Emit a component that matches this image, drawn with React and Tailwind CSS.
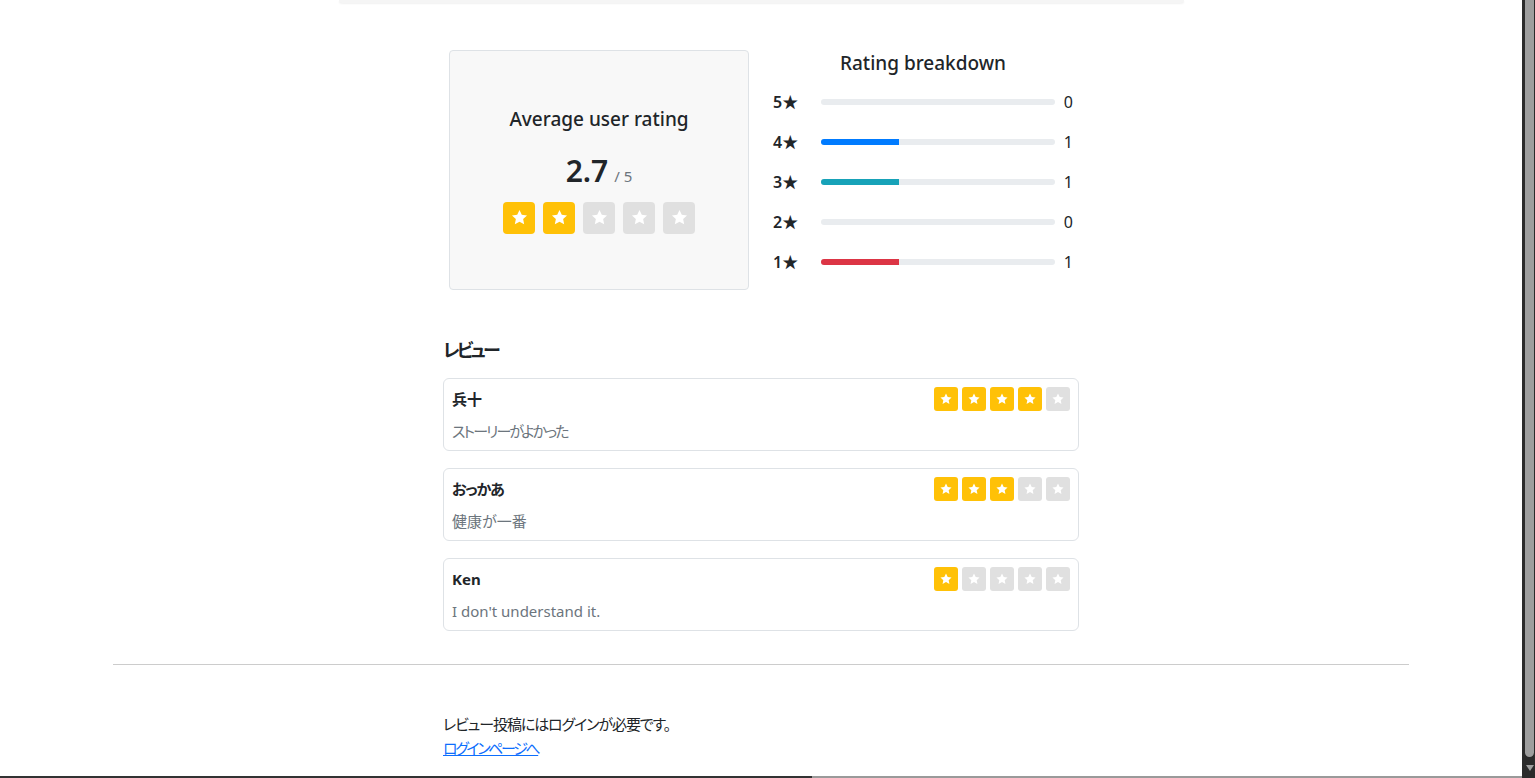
import React from "react";

const summary = { average: 2.7, max: 5, filled: 2 };

const breakdown = [
  { stars: 5, count: 0, color: "" },
  { stars: 4, count: 1, color: "bg-[#007bff]" },
  { stars: 3, count: 1, color: "bg-[#17a2b8]" },
  { stars: 2, count: 0, color: "" },
  { stars: 1, count: 1, color: "bg-[#dc3545]" },
];

// tracking tightens kana so the widths land near the reference's Windows font
const reviews = [
  { name: "兵十", nameTrack: "", rating: 4, body: "ストーリーがよかった", bodyTrack: "tracking-[-1.9px]" },
  { name: "おっかあ", nameTrack: "tracking-[-1.2px]", rating: 3, body: "健康が一番", bodyTrack: "" },
  { name: "Ken", nameTrack: "", rating: 1, body: "I don't understand it.", bodyTrack: "" },
];

const StarGlyph = ({ size }) => (
  <svg width={size} height={size} viewBox="0 0 24 24" fill="#fff">
    <path d="M12 2.5l2.9 6.1 6.6.8-4.9 4.6 1.3 6.6L12 17.3l-5.9 3.3 1.3-6.6-4.9-4.6 6.6-.8z" />
  </svg>
);

const StarBox = ({ on, big }) => (
  <div
    className={
      (big ? "h-8 w-8 rounded-[4px]" : "h-6 w-6 rounded-[3px]") +
      " flex items-center justify-center " +
      (on ? "bg-[#ffc107]" : "bg-[#e0e0e0]")
    }
  >
    <StarGlyph size={big ? 19 : 14} />
  </div>
);

const StarRow = ({ value, big }) => (
  <div className={"flex " + (big ? "gap-2" : "gap-1")}>
    {[1, 2, 3, 4, 5].map((i) => (
      <StarBox key={i} on={i <= value} big={big} />
    ))}
  </div>
);

const ReviewCard = ({ review }) => (
  <div className="rounded-md border border-[#dee2e6] p-2">
    <div className="flex h-6 items-center justify-between">
      <span className={"text-[15px] font-bold text-[#212529] " + review.nameTrack}>{review.name}</span>
      <StarRow value={review.rating} />
    </div>
    <p className={"mt-[9px] text-[15px] leading-[22px] text-[#6c757d] " + review.bodyTrack}>{review.body}</p>
  </div>
);

export default function App() {
  return (
    <div className="flex h-[778px] overflow-hidden bg-white font-['Segoe_UI','Noto_Sans','Noto_Sans_CJK_JP',sans-serif] text-[#212529] [font-feature-settings:'palt']">
      <main className="flex flex-1 flex-col">
        <div className="mx-auto h-[3px] w-[845px] rounded-b bg-[#f5f5f5] shadow-[0_1px_2px_rgba(0,0,0,0.06)]" />

        <div className="mx-auto mt-[47px] w-[636px]">
          <div className="flex gap-6 px-[6px]">
            <div className="flex h-[240px] w-[300px] flex-col items-center justify-center rounded border border-[#dee2e6] bg-[#f8f8f8]">
              <h5 className="text-[19px] font-medium leading-6">Average user rating</h5>
              <div className="mt-[21px] flex items-baseline gap-[6px]">
                <span className="text-[30px] font-semibold leading-[38px]">{summary.average}</span>
                <span className="text-[15px] text-[#6c757d]">/ {summary.max}</span>
              </div>
              <div className="mt-3">
                <StarRow value={summary.filled} big />
              </div>
            </div>

            <div className="w-[300px]">
              <h5 className="text-center text-[19px] font-medium leading-[26px]">Rating breakdown</h5>
              <div className="mt-[6px]">
                {breakdown.map((row) => (
                  <div key={row.stars} className="flex h-10 items-center">
                    <span className="w-12 text-[16px] font-semibold">{row.stars}★</span>
                    <div className="h-[6px] w-[235px] overflow-hidden rounded-full bg-[#e9ecef]">
                      {row.count > 0 && (
                        <div className={"h-full " + row.color} style={{ width: `${(row.count / 3) * 100}%` }} />
                      )}
                    </div>
                    <span className="ml-[9px] text-[16px]">{row.count}</span>
                  </div>
                ))}
              </div>
            </div>
          </div>

          <h5 className="mt-[48px] text-[18px] font-semibold leading-6 tracking-[-2.8px]">レビュー</h5>
          <div className="mt-[16px] flex flex-col gap-[17px]">
            {reviews.map((r) => (
              <ReviewCard key={r.name} review={r} />
            ))}
          </div>
        </div>

        <hr className="mx-auto mt-[33px] w-[1296px] border-t border-[#cccccc]" />

        <div className="mx-auto mt-[47px] w-[636px] text-[15px] leading-6">
          <p className="tracking-[-1.1px]">レビュー投稿にはログインが必要です。</p>
          <a href="#" className="tracking-[-2.4px] text-[#0d6efd] underline">
            ログインページへ
          </a>
        </div>

        <div className="mt-auto flex h-[2px]">
          <div className="w-[812px] bg-[#333]" />
          <div className="flex-1 bg-[#9a9a9a]" />
        </div>
      </main>

      <aside className="flex w-[13px] flex-col border-l-[3px] border-r border-[#2b2b2b] bg-[#2b2b2b]">
        <div className="h-[757px] rounded-b-full bg-[#9e9e9e]" />
        <div className="flex flex-1 items-center justify-center">
          <div className="h-0 w-0 border-x-[4px] border-t-[6px] border-x-transparent border-t-[#9e9e9e]" />
        </div>
      </aside>
    </div>
  );
}
